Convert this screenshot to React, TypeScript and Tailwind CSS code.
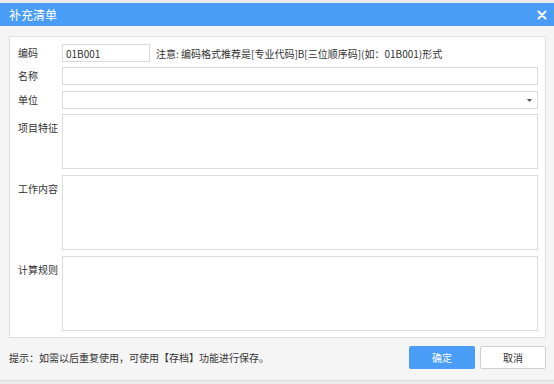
const font = { fontFamily: '"Microsoft YaHei", "Noto Sans CJK SC", "Noto Sans", sans-serif' };

function Label({ text, top }: { text: string; top?: boolean }) {
  return (
    <div
      className={`w-[44px] shrink-0 whitespace-nowrap text-[10px] leading-[12px] text-[#333] ${
        top ? 'pt-[8px]' : 'flex items-center'
      }`}
    >
      {text}
    </div>
  );
}

export default function App() {
  return (
    <div className="w-[554px] h-[384px] bg-[#f5f5f5] flex flex-col overflow-hidden" style={font}>
      <div className="h-[3px] bg-[#ebebeb] shrink-0" />
      <div className="h-[23px] shrink-0 bg-[#4a9df7] flex items-center justify-between pl-[9px] pr-[6px]">
        <span className="text-[12px] text-white">补充清单</span>
        <svg width="10" height="10" viewBox="0 0 10 10" className="mr-[1px]">
          <path d="M1.5 1.5 L8.5 8.5 M8.5 1.5 L1.5 8.5" stroke="white" strokeWidth="2" strokeLinecap="round" />
        </svg>
      </div>
      <div className="flex-1 flex flex-col pl-[9px] pr-[8px] pt-[10px]">
        <div className="h-[302px] bg-white border border-[#e0e0e0] pl-[8px] pr-[7px] pt-[7px] flex flex-col">
          <div className="flex h-[18px]">
            <Label text="编码" />
            <div className="w-[88px] h-[18px] border border-[#dcdcdc] px-[3px] text-[10px] text-[#333] flex items-center">01B001</div>
            <div className="ml-[6px] text-[10px] text-[#333] flex items-center whitespace-nowrap">
              注意: 编码格式推荐是[专业代码]B[三位顺序码](如：01B001)形式
            </div>
          </div>
          <div className="flex h-[18px] mt-[5px]">
            <Label text="名称" />
            <div className="flex-1 border border-[#dcdcdc]" />
          </div>
          <div className="flex h-[18px] mt-[6px]">
            <Label text="单位" />
            <div className="flex-1 border border-[#dcdcdc] flex items-center justify-end pr-[5px]">
              <svg width="5" height="3" viewBox="0 0 5 3">
                <path d="M0 0 L5 0 L2.5 3 Z" fill="#555" />
              </svg>
            </div>
          </div>
          <div className="flex h-[55px] mt-[5px]">
            <Label text="项目特征" top />
            <div className="flex-1 border border-[#dcdcdc]" />
          </div>
          <div className="flex h-[75px] mt-[6px]">
            <Label text="工作内容" top />
            <div className="flex-1 border border-[#dcdcdc]" />
          </div>
          <div className="flex h-[75px] mt-[6px]">
            <Label text="计算规则" top />
            <div className="flex-1 border border-[#dcdcdc]" />
          </div>
        </div>
        <div className="flex items-center justify-between mt-[8px] h-[23px]">
          <span className="text-[10px] text-[#333] whitespace-nowrap">提示：如需以后重复使用，可使用【存档】功能进行保存。</span>
          <div className="flex gap-[5px]">
            <button className="w-[66px] h-[23px] rounded-[2px] bg-[#4a9df7] text-white text-[10px]">确定</button>
            <button className="w-[66px] h-[23px] rounded-[2px] bg-white border border-[#cfcfcf] text-[#333] text-[10px]">取消</button>
          </div>
        </div>
        <div className="flex-1" />
      </div>
      <div className="h-[4px] shrink-0 bg-[#ececec] border-t border-[#dedede]" />
    </div>
  );
}
